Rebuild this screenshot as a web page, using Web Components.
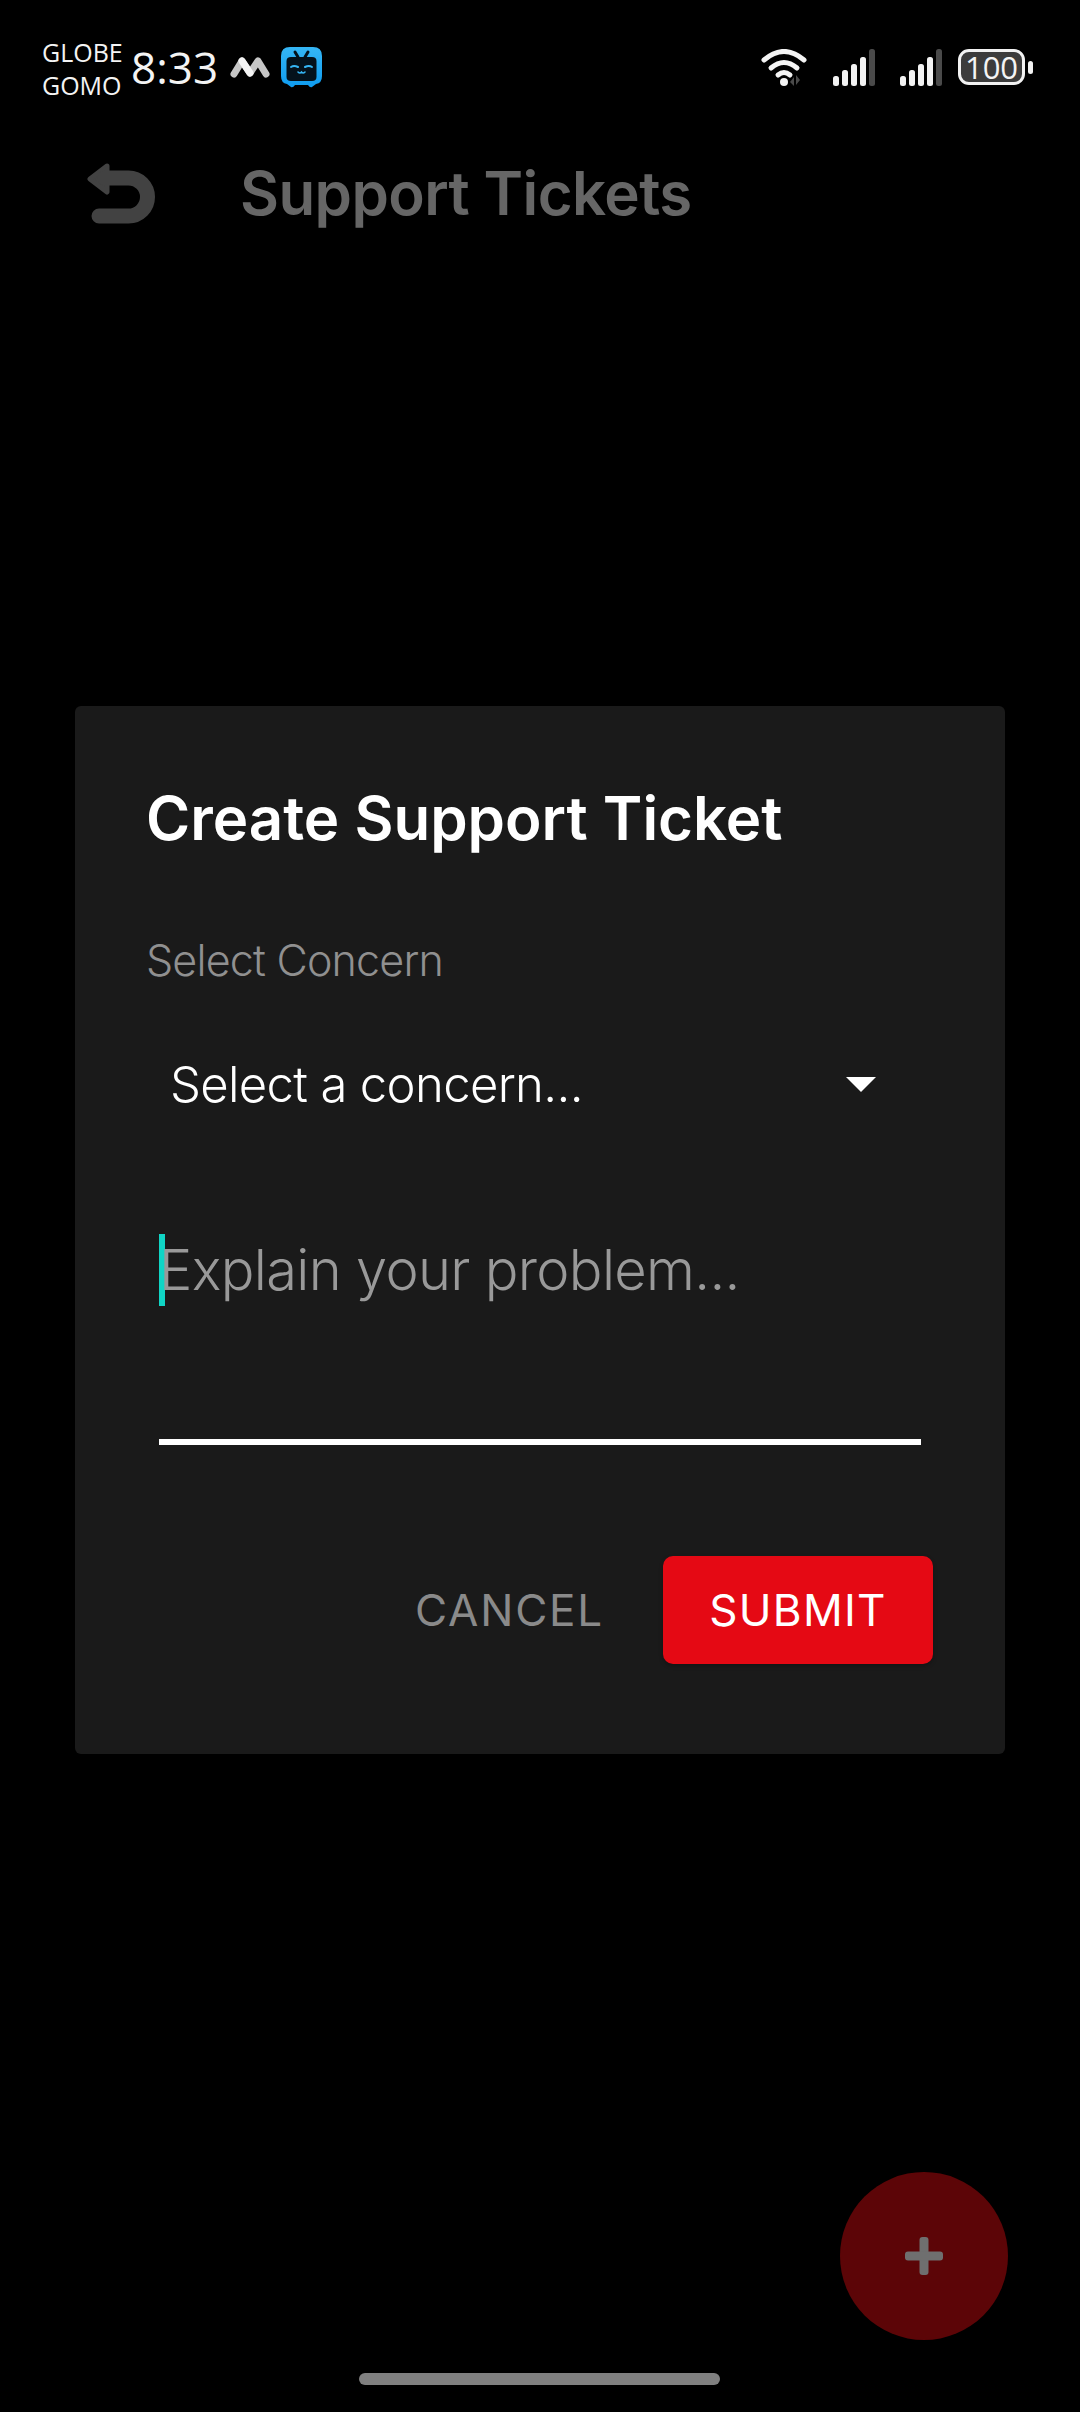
<!DOCTYPE html>
<html>
<head>
<meta charset="utf-8">
<style>
  html, body { margin: 0; height: 100%; background: #000; }
  body { font-family: Inter, "Open Sans", sans-serif; }
</style>
</head>
<body>
<support-screen>
  <status-bar slot="status"></status-bar>
  <tool-bar slot="toolbar" title="Support Tickets"></tool-bar>
  <ticket-dialog slot="dialog">
    <ticket-select label="Select Concern" value="Select a concern..."></ticket-select>
    <ticket-input placeholder="Explain your problem..."></ticket-input>
  </ticket-dialog>
  <add-fab slot="fab"></add-fab>
</support-screen>

<script>
class SupportScreen extends HTMLElement {
  constructor() {
    super();
    const root = this.attachShadow({ mode: 'open' });
    root.innerHTML = `
      <style>
        :host { display: flex; flex-direction: column; position: relative; width: 1080px; height: 2412px; background: #000; overflow: hidden; }
        .center { position: absolute; left: 75px; top: 706px; }
        .fab { position: absolute; left: 840px; top: 2172px; }
        .home { position: absolute; left: 359px; top: 2373px; width: 361px; height: 12px; border-radius: 6px; background: #808080; }
      </style>
      <slot name="status"></slot>
      <slot name="toolbar"></slot>
      <div class="center"><slot name="dialog"></slot></div>
      <div class="fab"><slot name="fab"></slot></div>
      <div class="home"></div>
    `;
  }
}

class StatusBar extends HTMLElement {
  constructor() {
    super();
    const root = this.attachShadow({ mode: 'open' });
    const bars = `
      <rect x="0" y="27" width="6" height="10" rx="2.5" fill="#f2f2f2"/>
      <rect x="9" y="21" width="6" height="16" rx="2.5" fill="#f2f2f2"/>
      <rect x="18" y="15" width="6" height="22" rx="2.5" fill="#f2f2f2"/>
      <rect x="27" y="8" width="6" height="29" rx="2.5" fill="#f2f2f2"/>
      <rect x="36" y="0" width="6" height="37" rx="2.5" fill="#4a4a4a"/>`;
    root.innerHTML = `
      <style>
        :host { display: flex; align-items: center; height: 96px; padding: 38px 47px 0 42px; box-sizing: border-box; color: #f4f4f4; font-family: "Open Sans", sans-serif; }
        .carrier { font-size: 25px; font-weight: 500; line-height: 33px; width: 89px; margin-top: 3px; white-space: nowrap; }
        .time { font-size: 44px; font-weight: 500; width: 99px; }
        .left, .right { display: flex; align-items: center; }
        .right { margin-left: auto; }
        svg { display: block; }
        .app { margin-left: 11px; }
        .sig { margin-left: 25px; }
        .bat { display: flex; align-items: center; justify-content: center; box-sizing: border-box; width: 67px; height: 36px; margin-left: 16px; border: 3px solid #f2f2f2; border-radius: 11px; background: #3c3c3c; font-size: 31px; font-weight: 500; line-height: 30px; }
        .nub { width: 5px; height: 13px; margin-left: 3px; border-radius: 2.5px; background: #f2f2f2; }
      </style>
      <div class="left">
        <div class="carrier">GLOBE<br>GOMO</div>
        <div class="time">8:33</div>
        <svg width="40" height="22" viewBox="0 0 40 22">
          <path d="M4 18 L12 5 L20 17 L28 5 L36 18" fill="none" stroke="#c6c6c6" stroke-width="7" stroke-linejoin="round" stroke-linecap="round"/>
          <path d="M12 5 L20 17" stroke="#f4f4f4" stroke-width="7" stroke-linecap="round"/>
        </svg>
        <svg class="app" width="41" height="41" viewBox="0 0 41 41">
          <defs><linearGradient id="bl" x1="0" y1="0" x2="0" y2="1"><stop offset="0" stop-color="#35b6f5"/><stop offset="1" stop-color="#0f9cf0"/></linearGradient></defs>
          <path d="M9 0 H32 Q41 0 41 9 V29 Q41 36 35 37 L31 40 Q29 41 27 38 H14 Q12 41 10 40 L6 37 Q0 36 0 29 V9 Q0 0 9 0 Z" fill="url(#bl)"/>
          <path d="M10 10 H31 Q35.5 10 35.5 14 V30 Q35.5 34 31 34 H10 Q5.5 34 5.5 30 V14 Q5.5 10 10 10 Z" fill="#04121c"/>
          <path d="M14 5 L17 10 M27 5 L24 10" stroke="#04121c" stroke-width="3" stroke-linecap="round"/>
          <path d="M10 20 Q13 18 17 20 M24 20 Q28 18 31 20" fill="none" stroke="#35b6f5" stroke-width="2" stroke-linecap="round"/>
          <path d="M17 25 Q19 27 20.5 25 Q22 27 24 25" fill="none" stroke="#35b6f5" stroke-width="1.6" stroke-linecap="round"/>
        </svg>
      </div>
      <div class="right">
        <svg width="47" height="37" viewBox="0 0 47 37">
          <path d="M3 11 Q23 -6 43 11" fill="none" stroke="#f4f4f4" stroke-width="5" stroke-linecap="round"/>
          <path d="M10 19 Q23 8 36 19" fill="none" stroke="#f4f4f4" stroke-width="5" stroke-linecap="round"/>
          <path d="M17 26 Q23 21 29 26" fill="none" stroke="#f4f4f4" stroke-width="5" stroke-linecap="round"/>
          <circle cx="23" cy="33" r="4" fill="#f4f4f4"/>
          <path d="M33 37 V28 L29 33 Z M35 26 V36 L39 31 Z" fill="#4a4a4a"/>
        </svg>
        <svg class="sig" width="42" height="37" viewBox="0 0 42 37">${bars}</svg>
        <svg class="sig" width="42" height="37" viewBox="0 0 42 37">${bars}</svg>
        <div class="bat">100</div>
        <div class="nub"></div>
      </div>
    `;
  }
}

class ToolBar extends HTMLElement {
  constructor() {
    super();
    const root = this.attachShadow({ mode: 'open' });
    root.innerHTML = `
      <style>
        :host { display: flex; align-items: center; height: 194px; padding-left: 87px; box-sizing: border-box; }
        svg { display: block; }
        h1 { margin: 0 0 0 84px; font: 600 60px Inter, sans-serif; color: #666; letter-spacing: -0.6px; }
      </style>
      <svg width="69" height="62" viewBox="0 0 69 62">
        <path d="M20 4 L3 17 L20 30 Z" fill="#424242" stroke="#424242" stroke-width="5" stroke-linejoin="round"/>
        <path d="M18 16 H41.5 A19 19 0 0 1 41.5 54 H12" fill="none" stroke="#424242" stroke-width="15" stroke-linecap="round"/>
      </svg>
      <h1></h1>
    `;
    root.querySelector('h1').textContent = this.getAttribute('title');
  }
}

class TicketDialog extends HTMLElement {
  constructor() {
    super();
    const root = this.attachShadow({ mode: 'open' });
    root.innerHTML = `
      <style>
        :host { display: flex; flex-direction: column; width: 930px; height: 1048px; box-sizing: border-box; padding: 73px 72px 0 72px; background: #1a1a1a; border-radius: 6px; font-family: Inter, sans-serif; }
        h2 { margin: 0 0 0 -1px; font-size: 60px; font-weight: 600; line-height: 78px; color: #fff; }
        .actions { display: flex; justify-content: flex-end; align-items: center; margin-top: 111px; }
        .cancel { font-size: 44px; font-weight: 400; letter-spacing: 1.8px; color: #8a8a8a; margin-right: 59px; }
        .submit { display: flex; align-items: center; justify-content: center; width: 270px; height: 108px; border-radius: 10px; background: #e50914; color: #fff; font-size: 44px; font-weight: 400; letter-spacing: 1.3px; box-shadow: 0 2px 4px rgba(0,0,0,.25); }
      </style>
      <h2>Create Support Ticket</h2>
      <slot></slot>
      <div class="actions">
        <div class="cancel">CANCEL</div>
        <div class="submit">SUBMIT</div>
      </div>
    `;
  }
}

class TicketSelect extends HTMLElement {
  constructor() {
    super();
    const root = this.attachShadow({ mode: 'open' });
    root.innerHTML = `
      <style>
        :host { display: block; margin-top: 73px; }
        label { display: block; margin-left: -1px; font-size: 43px; font-weight: 300; line-height: 60px; letter-spacing: -0.8px; color: #909090; }
        .row { display: flex; align-items: center; justify-content: space-between; height: 124px; margin-top: 32px; padding: 0 57px 0 23px; color: #fff; font-size: 49px; font-weight: 300; letter-spacing: -0.65px; }
        .arrow { width: 0; height: 0; border-left: 15px solid transparent; border-right: 15px solid transparent; border-top: 15px solid #fff; }
      </style>
      <label></label>
      <div class="row"><span class="value"></span><span class="arrow"></span></div>
    `;
    root.querySelector('label').textContent = this.getAttribute('label');
    root.querySelector('.value').textContent = this.getAttribute('value');
  }
}

class TicketInput extends HTMLElement {
  constructor() {
    super();
    const root = this.attachShadow({ mode: 'open' });
    root.innerHTML = `
      <style>
        :host { display: block; margin: 88px 12px 0 12px; height: 211px; border-bottom: 6px solid #fff; box-sizing: border-box; }
        .field { display: flex; align-items: center; height: 72px; font-size: 56px; font-weight: 300; letter-spacing: -0.67px; color: #999; }
        .caret { width: 6px; height: 72px; margin-right: -6px; background: #10d5c5; flex: none; }
      </style>
      <div class="field"><span class="caret"></span><span class="ph"></span></div>
    `;
    root.querySelector('.ph').textContent = this.getAttribute('placeholder');
  }
}

class AddFab extends HTMLElement {
  constructor() {
    super();
    const root = this.attachShadow({ mode: 'open' });
    root.innerHTML = `
      <style>
        :host { display: flex; align-items: center; justify-content: center; width: 168px; height: 168px; border-radius: 50%; background: #5c0507; }
        svg { display: block; }
      </style>
      <svg width="40" height="40" viewBox="0 0 40 40">
        <rect x="15.5" y="1" width="9" height="38" rx="3" fill="#6f6f6f"/>
        <rect x="1" y="15.5" width="38" height="9" rx="3" fill="#6f6f6f"/>
      </svg>
    `;
  }
}

customElements.define('support-screen', SupportScreen);
customElements.define('status-bar', StatusBar);
customElements.define('tool-bar', ToolBar);
customElements.define('ticket-dialog', TicketDialog);
customElements.define('ticket-select', TicketSelect);
customElements.define('ticket-input', TicketInput);
customElements.define('add-fab', AddFab);
</script>
</body>
</html>
